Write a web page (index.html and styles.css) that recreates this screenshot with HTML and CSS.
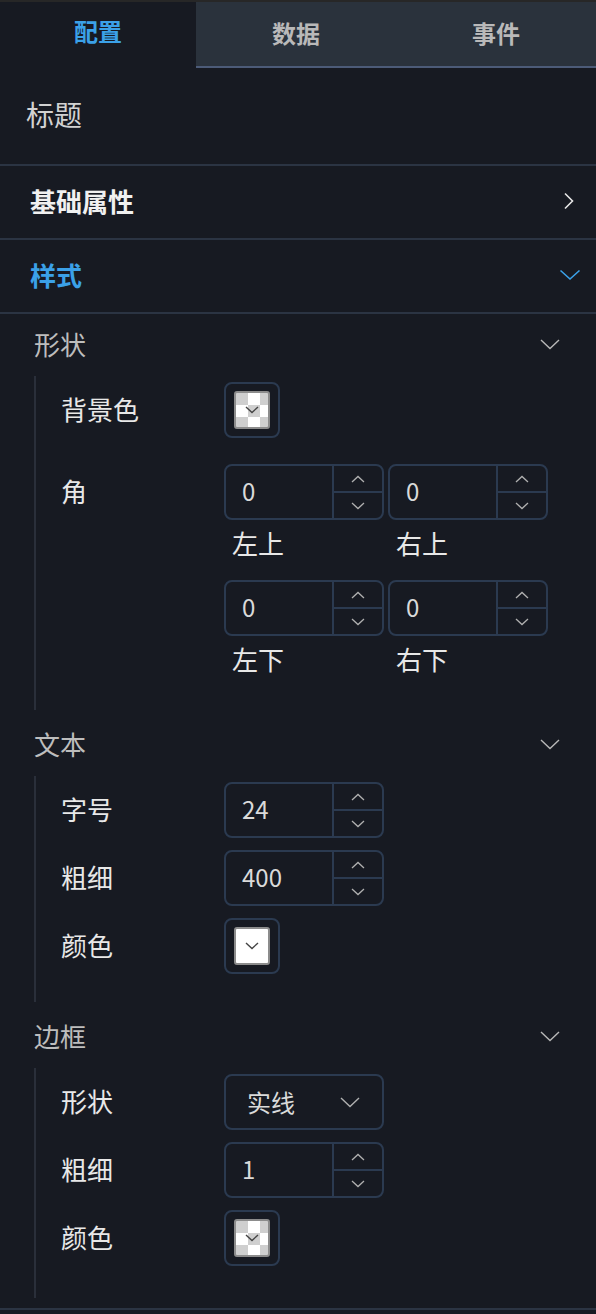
FILE: index.html
```html
<!DOCTYPE html>
<html lang="zh">
<head>
<meta charset="utf-8">
<title>配置</title>
<link rel="stylesheet" href="styles.css">
</head>
<body>
<div class="topbar"></div>
<nav class="tabs">
  <div class="tab active">配置</div>
  <div class="tab">数据</div>
  <div class="tab">事件</div>
</nav>

<div class="title-row">标题</div>

<div class="panel-row">
  <span>基础属性</span>
  <svg class="ico-right" width="14" height="18" viewBox="0 0 14 18"><path d="M3 1.5 L10.5 9 L3 16.5" fill="none" stroke="#e6e6e6" stroke-width="1.6"/></svg>
</div>

<div class="panel-row open">
  <span>样式</span>
  <svg class="ico-down" width="22" height="12" viewBox="0 0 22 12"><path d="M1.5 1.5 L11 10 L20.5 1.5" fill="none" stroke="#3ba1e8" stroke-width="1.6"/></svg>
</div>

<div class="sections">
  <section class="group">
    <div class="group-head">
      <span>形状</span>
      <svg width="20" height="11" viewBox="0 0 20 11"><path d="M1 1 L10 9.5 L19 1" fill="none" stroke="#b8b8b8" stroke-width="1.4"/></svg>
    </div>
    <div class="group-body">
      <div class="field">
        <div class="label">背景色</div>
        <div class="swatch">
          <span class="chip checker"><svg width="14" height="8" viewBox="0 0 14 8"><path d="M1 1 L7 6.5 L13 1" fill="none" stroke="#444" stroke-width="1.4"/></svg></span>
        </div>
      </div>
      <div class="field corners-field">
        <div class="label">角</div>
        <div class="corners">
          <div class="corner">
            <div class="num"><span class="val">0</span><span class="spin"><span><svg width="14" height="8" viewBox="0 0 14 8"><path d="M1 7 L7 1.5 L13 7" fill="none" stroke="#b0b0b0" stroke-width="1.3"/></svg></span><span><svg width="14" height="8" viewBox="0 0 14 8"><path d="M1 1 L7 6.5 L13 1" fill="none" stroke="#b0b0b0" stroke-width="1.3"/></svg></span></span></div>
            <div class="caption">左上</div>
          </div>
          <div class="corner">
            <div class="num"><span class="val">0</span><span class="spin"><span><svg width="14" height="8" viewBox="0 0 14 8"><path d="M1 7 L7 1.5 L13 7" fill="none" stroke="#b0b0b0" stroke-width="1.3"/></svg></span><span><svg width="14" height="8" viewBox="0 0 14 8"><path d="M1 1 L7 6.5 L13 1" fill="none" stroke="#b0b0b0" stroke-width="1.3"/></svg></span></span></div>
            <div class="caption">右上</div>
          </div>
          <div class="corner">
            <div class="num"><span class="val">0</span><span class="spin"><span><svg width="14" height="8" viewBox="0 0 14 8"><path d="M1 7 L7 1.5 L13 7" fill="none" stroke="#b0b0b0" stroke-width="1.3"/></svg></span><span><svg width="14" height="8" viewBox="0 0 14 8"><path d="M1 1 L7 6.5 L13 1" fill="none" stroke="#b0b0b0" stroke-width="1.3"/></svg></span></span></div>
            <div class="caption">左下</div>
          </div>
          <div class="corner">
            <div class="num"><span class="val">0</span><span class="spin"><span><svg width="14" height="8" viewBox="0 0 14 8"><path d="M1 7 L7 1.5 L13 7" fill="none" stroke="#b0b0b0" stroke-width="1.3"/></svg></span><span><svg width="14" height="8" viewBox="0 0 14 8"><path d="M1 1 L7 6.5 L13 1" fill="none" stroke="#b0b0b0" stroke-width="1.3"/></svg></span></span></div>
            <div class="caption">右下</div>
          </div>
        </div>
      </div>
    </div>
  </section>

  <section class="group">
    <div class="group-head">
      <span>文本</span>
      <svg width="20" height="11" viewBox="0 0 20 11"><path d="M1 1 L10 9.5 L19 1" fill="none" stroke="#b8b8b8" stroke-width="1.4"/></svg>
    </div>
    <div class="group-body tight">
      <div class="field">
        <div class="label">字号</div>
        <div class="num"><span class="val">24</span><span class="spin"><span><svg width="14" height="8" viewBox="0 0 14 8"><path d="M1 7 L7 1.5 L13 7" fill="none" stroke="#b0b0b0" stroke-width="1.3"/></svg></span><span><svg width="14" height="8" viewBox="0 0 14 8"><path d="M1 1 L7 6.5 L13 1" fill="none" stroke="#b0b0b0" stroke-width="1.3"/></svg></span></span></div>
      </div>
      <div class="field">
        <div class="label">粗细</div>
        <div class="num"><span class="val">400</span><span class="spin"><span><svg width="14" height="8" viewBox="0 0 14 8"><path d="M1 7 L7 1.5 L13 7" fill="none" stroke="#b0b0b0" stroke-width="1.3"/></svg></span><span><svg width="14" height="8" viewBox="0 0 14 8"><path d="M1 1 L7 6.5 L13 1" fill="none" stroke="#b0b0b0" stroke-width="1.3"/></svg></span></span></div>
      </div>
      <div class="field">
        <div class="label">颜色</div>
        <div class="swatch">
          <span class="chip white"><svg width="14" height="8" viewBox="0 0 14 8"><path d="M1 1 L7 6.5 L13 1" fill="none" stroke="#444" stroke-width="1.4"/></svg></span>
        </div>
      </div>
    </div>
  </section>

  <section class="group">
    <div class="group-head">
      <span>边框</span>
      <svg width="20" height="11" viewBox="0 0 20 11"><path d="M1 1 L10 9.5 L19 1" fill="none" stroke="#b8b8b8" stroke-width="1.4"/></svg>
    </div>
    <div class="group-body">
      <div class="field">
        <div class="label">形状</div>
        <div class="select">
          <span>实线</span>
          <svg width="20" height="11" viewBox="0 0 20 11"><path d="M1 1 L10 9.5 L19 1" fill="none" stroke="#b0b0b0" stroke-width="1.4"/></svg>
        </div>
      </div>
      <div class="field">
        <div class="label">粗细</div>
        <div class="num"><span class="val">1</span><span class="spin"><span><svg width="14" height="8" viewBox="0 0 14 8"><path d="M1 7 L7 1.5 L13 7" fill="none" stroke="#b0b0b0" stroke-width="1.3"/></svg></span><span><svg width="14" height="8" viewBox="0 0 14 8"><path d="M1 1 L7 6.5 L13 1" fill="none" stroke="#b0b0b0" stroke-width="1.3"/></svg></span></span></div>
      </div>
      <div class="field">
        <div class="label">颜色</div>
        <div class="swatch">
          <span class="chip checker"><svg width="14" height="8" viewBox="0 0 14 8"><path d="M1 1 L7 6.5 L13 1" fill="none" stroke="#444" stroke-width="1.4"/></svg></span>
        </div>
      </div>
    </div>
  </section>
</div>
<div class="bottom-line"></div>
</body>
</html>
```
FILE: styles.css
```css
* { box-sizing: border-box; }

body {
  margin: 0;
  background: #171a22;
  font-family: "Noto Sans CJK SC", "Noto Sans", sans-serif;
  color: #e6e6e6;
}

.topbar {
  height: 2px;
  background: #272727;
}

.tabs {
  display: grid;
  grid-template-columns: 196px 1fr 1fr;
  height: 66px;
}

.tab {
  display: flex;
  align-items: center;
  justify-content: center;
  font-size: 24px;
  font-weight: 700;
  color: #b9b9b9;
  background: #2a323c;
  border-bottom: 2px solid #4c5b78;
  padding-bottom: 4px;
}

.tab.active {
  background: transparent;
  border-bottom-color: transparent;
  color: #3ba1e8;
  padding-bottom: 8px;
}

.title-row {
  height: 98px;
  display: flex;
  align-items: center;
  padding-left: 26px;
  padding-bottom: 4px;
  font-size: 28px;
  color: #d2d2d2;
  border-bottom: 2px solid #2b3443;
}

.panel-row {
  height: 74px;
  display: flex;
  align-items: center;
  justify-content: space-between;
  padding: 0 20px 4px 30px;
  font-size: 26px;
  font-weight: 700;
  color: #f0f0f0;
  border-bottom: 2px solid #2b3443;
}

.panel-row svg {
  margin-top: 2px;
}

.panel-row.open {
  color: #3ba1e8;
  padding-right: 15px;
}

.sections {
  padding-bottom: 6px;
}

.group {
  margin-bottom: 4px;
}

.group-head {
  height: 62px;
  display: flex;
  align-items: center;
  justify-content: space-between;
  padding: 0 36px 4px 34px;
  font-size: 26px;
  color: #bdbdbd;
}

.group-head svg {
  margin-top: 2px;
}

.group-body {
  margin-left: 34px;
  border-left: 2px solid #2a2f3a;
  padding: 6px 0 32px 25px;
  display: flex;
  flex-direction: column;
  gap: 12px;
}

.group-body.tight {
  padding-bottom: 28px;
}

.field {
  display: flex;
  align-items: flex-start;
}

.label {
  width: 163px;
  flex: none;
  height: 56px;
  line-height: 54px;
  font-size: 26px;
  color: #e8e8e8;
}

.corners-field {
  margin-top: 14px;
}

.corners {
  display: grid;
  grid-template-columns: 160px 160px;
  column-gap: 4px;
  row-gap: 18px;
}

.caption {
  margin-top: 6px;
  height: 36px;
  line-height: 34px;
  padding-left: 8px;
  font-size: 26px;
  color: #e8e8e8;
}

.num {
  width: 160px;
  height: 56px;
  display: flex;
  border: 2px solid #2b3a50;
  border-radius: 8px;
}

.val {
  flex: 1;
  padding-left: 16px;
  line-height: 50px;
  font-size: 24px;
  color: #dadada;
}

.spin {
  width: 50px;
  flex: none;
  display: flex;
  flex-direction: column;
  border-left: 2px solid #2b3a50;
}

.spin > span {
  flex: 1;
  display: flex;
  align-items: center;
  justify-content: center;
}

.spin > span + span {
  border-top: 2px solid #2b3a50;
}

.swatch {
  width: 56px;
  height: 56px;
  border: 2px solid #2b3a50;
  border-radius: 8px;
  display: flex;
  align-items: center;
  justify-content: center;
}

.chip {
  width: 36px;
  height: 38px;
  border: 2px solid #8c8c8c;
  border-radius: 3px;
  display: flex;
  align-items: center;
  justify-content: center;
}

.chip.checker {
  background: conic-gradient(#ffffff 0 25%, #cfcfcf 0 50%, #ffffff 0 75%, #cfcfcf 0) 0 0 / 24px 24px;
}

.chip.white {
  background: #ffffff;
}

.select {
  width: 160px;
  height: 56px;
  border: 2px solid #2b3a50;
  border-radius: 8px;
  display: flex;
  align-items: center;
  justify-content: space-between;
  padding: 0 22px 0 21px;
  font-size: 24px;
  color: #dadada;
}

.select span {
  padding-bottom: 2px;
}

.bottom-line {
  height: 2px;
  background: #2b3443;
}
```
